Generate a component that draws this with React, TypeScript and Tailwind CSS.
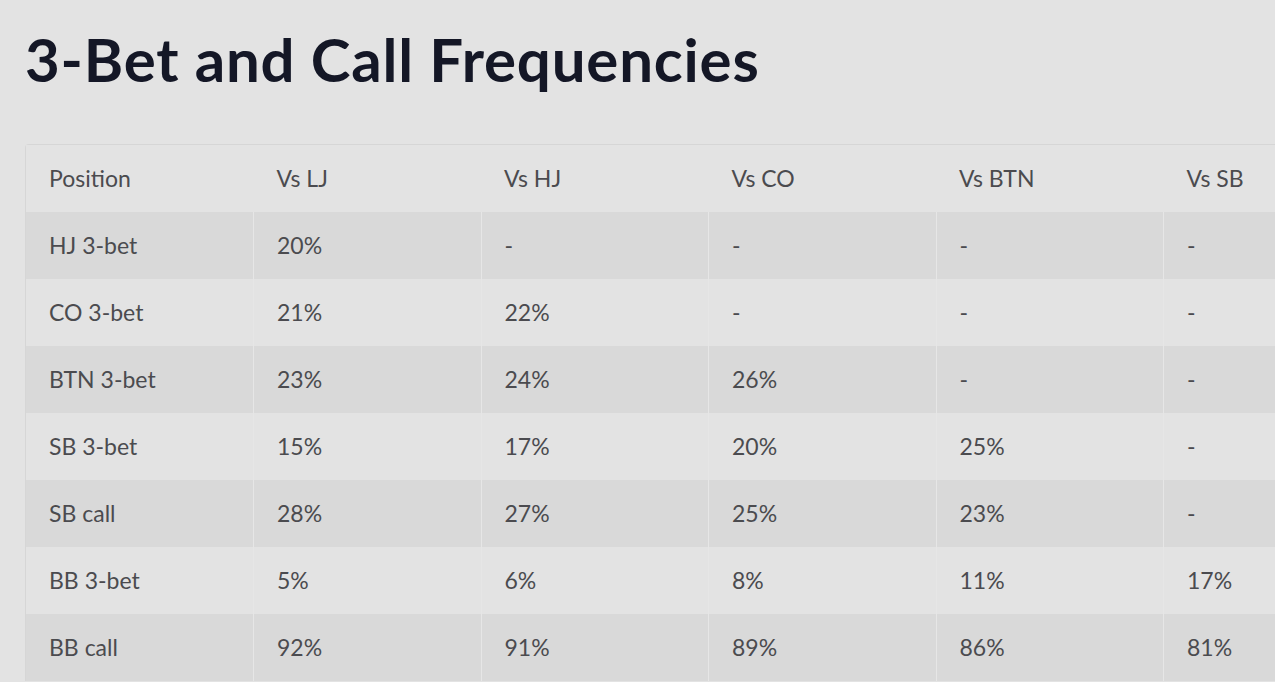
import React from "react";

const headers = ["Position", "Vs LJ", "Vs HJ", "Vs CO", "Vs BTN", "Vs SB"];

const rows: string[][] = [
  ["HJ 3-bet", "20%", "-", "-", "-", "-"],
  ["CO 3-bet", "21%", "22%", "-", "-", "-"],
  ["BTN 3-bet", "23%", "24%", "26%", "-", "-"],
  ["SB 3-bet", "15%", "17%", "20%", "25%", "-"],
  ["SB call", "28%", "27%", "25%", "23%", "-"],
  ["BB 3-bet", "5%", "6%", "8%", "11%", "17%"],
  ["BB call", "92%", "91%", "89%", "86%", "81%"],
];

const App = () => {
  return (
    <div className="h-[682px] w-[1275px] overflow-hidden bg-[#e3e3e3]">
      <h1
        className="pl-[25px] pt-[29px] text-[60px] font-bold leading-none tracking-[0.8px] text-[#141726]"
        style={{ fontFamily: "Lato, 'Noto Sans', sans-serif" }}
      >
        3-Bet and Call Frequencies
      </h1>
      <div className="ml-[25px] mt-[55px] w-[1366px] rounded-tl-[4px] border-l border-t border-[#d6d6d6]">
        <table
          className="w-full table-fixed border-collapse text-[23px] text-[#4b4b4f]"
          style={{ fontFamily: "Lato, 'Noto Sans', sans-serif" }}
        >
          <thead>
            <tr className="h-[67px] bg-[#e3e3e3]">
              {headers.map((h, i) => (
                <th key={i} className="pb-[1px] pl-[23px] text-left font-normal">
                  {h}
                </th>
              ))}
            </tr>
          </thead>
          <tbody>
            {rows.map((row, r) => (
              <tr key={r} className={r % 2 === 0 ? "h-[67px] bg-[#d9d9d9]" : "h-[67px] bg-[#e3e3e3]"}>
                {row.map((cell, c) => (
                  <td
                    key={c}
                    className={
                      c === 0
                        ? "pl-[23px]"
                        : "border-l border-[#e6e6e6] pl-[23px]"
                    }
                  >
                    {cell}
                  </td>
                ))}
              </tr>
            ))}
          </tbody>
        </table>
      </div>
    </div>
  );
};

export default App;
